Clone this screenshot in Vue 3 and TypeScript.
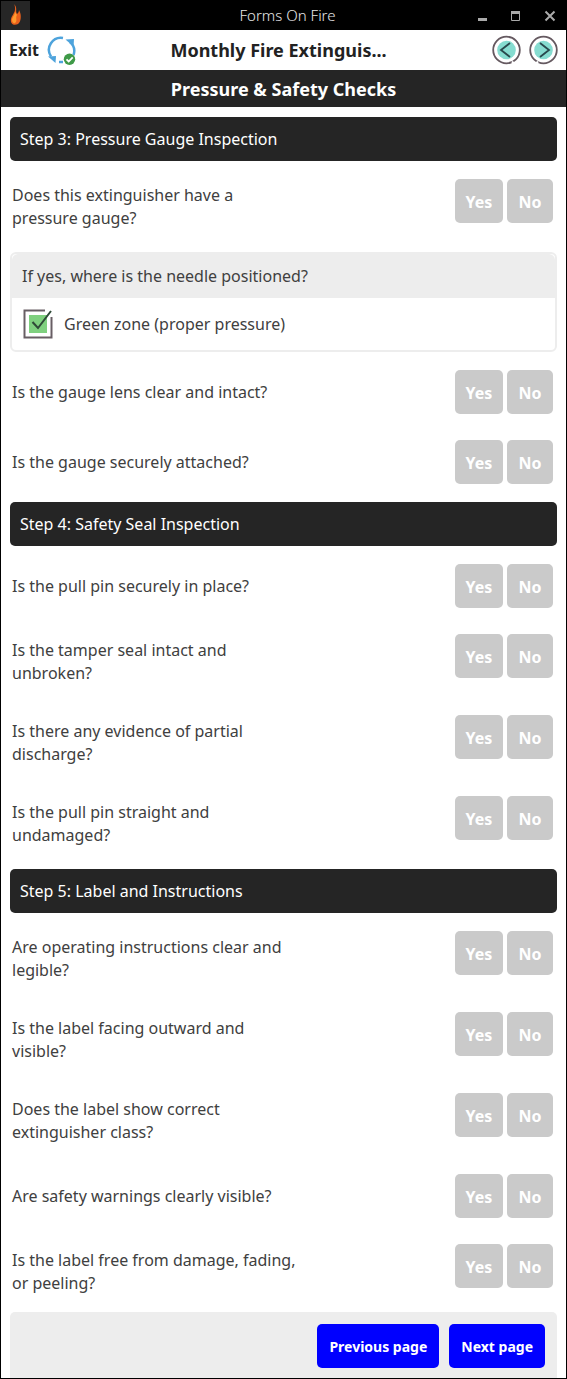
<script setup lang="ts">
import { reactive, ref } from 'vue'

type Answer = 'Yes' | 'No'

interface Question {
  id: string
  text: string
}

interface Section {
  title: string
  lead: Question[]
  needle: boolean
  questions: Question[]
}

const options: Answer[] = ['Yes', 'No']

const sections: Section[] = [
  {
    title: 'Step 3: Pressure Gauge Inspection',
    lead: [{ id: 'has-gauge', text: 'Does this extinguisher have a pressure gauge?' }],
    needle: true,
    questions: [
      { id: 'lens-clear', text: 'Is the gauge lens clear and intact?' },
      { id: 'gauge-attached', text: 'Is the gauge securely attached?' },
    ],
  },
  {
    title: 'Step 4: Safety Seal Inspection',
    lead: [],
    needle: false,
    questions: [
      { id: 'pin-place', text: 'Is the pull pin securely in place?' },
      { id: 'seal-intact', text: 'Is the tamper seal intact and unbroken?' },
      { id: 'discharge', text: 'Is there any evidence of partial discharge?' },
      { id: 'pin-straight', text: 'Is the pull pin straight and undamaged?' },
    ],
  },
  {
    title: 'Step 5: Label and Instructions',
    lead: [],
    needle: false,
    questions: [
      { id: 'instructions', text: 'Are operating instructions clear and legible?' },
      { id: 'label-outward', text: 'Is the label facing outward and visible?' },
      { id: 'label-class', text: 'Does the label show correct extinguisher class?' },
      { id: 'warnings', text: 'Are safety warnings clearly visible?' },
      { id: 'label-damage', text: 'Is the label free from damage, fading, or peeling?' },
    ],
  },
]

const answers = reactive<Record<string, Answer | undefined>>({})
const greenZone = ref(true)

function answer(id: string, value: Answer) {
  answers[id] = value
}
</script>

<template>
  <div class="window">
    <header class="titlebar">
      <span class="app-icon">
        <svg width="29" height="29" viewBox="0 0 29 29" aria-hidden="true">
          <path d="M13 3c4 4 1 7 3 10 1-1 2-2 2-4 3 5 2 12-1 14-4 2-8 0-7-5 1-4 4-6 4-10 0-2 0-3-1-5z" fill="#e8601c" />
          <path d="M14 9c1 4-3 7-3 10 0 2 2 4 3 3 3-2 0-5 2-8-1-1-2-3-2-5z" fill="#ff9a2e" />
        </svg>
      </span>
      <span class="app-name">Forms On Fire</span>
      <div class="controls">
        <button type="button" aria-label="Minimize">
          <svg width="12" height="12" viewBox="0 0 12 12"><path d="M2 9.500h9" stroke="#aaa" stroke-width="3" /></svg>
        </button>
        <button type="button" aria-label="Maximize">
          <svg width="12" height="12" viewBox="0 0 12 12"><path d="M1.500 2v8.500h8V2" fill="none" stroke="#aaa" /><path d="M1 2.500h9" stroke="#aaa" stroke-width="3" /></svg>
        </button>
        <button type="button" aria-label="Close">
          <svg width="12" height="12" viewBox="0 0 12 12"><path d="M1.500 1.500l9 9M10.500 1.500l-9 9" stroke="#aaa" stroke-width="2" /></svg>
        </button>
      </div>
    </header>

    <nav class="toolbar">
      <div class="left">
        <button type="button" class="exit">Exit</button>
        <button type="button" class="icon-button" aria-label="Sync">
          <svg width="30" height="30" viewBox="0 0 30 30" fill="none">
            <g stroke="#4da3dc" stroke-width="2.500">
              <path d="M16 3A12 12 0 0 0 4 21.500" />
              <path d="M23 7a12 12 0 0 1 3.500 13" />
              <path d="M12 27h4" />
            </g>
            <path d="M18.500 4.500l8.500-.500-.500 7.500z" fill="#4da3dc" />
            <path d="M1 21.500l8-.500-.500 7z" fill="#4da3dc" />
            <circle cx="22.500" cy="24.300" r="5.700" fill="#3f9a48" />
            <path d="M19.500 24.300l2.200 2.200 4-4.200" stroke="#fff" stroke-width="1.800" />
          </svg>
        </button>
      </div>
      <h1>Monthly Fire Extinguis...</h1>
      <div class="right">
        <button type="button" class="icon-button" aria-label="Previous">
          <svg width="29" height="30" viewBox="0 0 29 30" fill="none">
            <circle cx="14.500" cy="15" r="13.300" stroke="#655960" stroke-width="1.800" />
            <circle cx="14.500" cy="15" r="9.300" fill="#86dcd0" />
            <path d="M18 8l-9 7 9 7" stroke="#29484c" stroke-width="1.800" />
            <path d="M20 26.500l2 2" stroke="#fff" stroke-width="2" />
          </svg>
        </button>
        <button type="button" class="icon-button" aria-label="Next">
          <svg width="29" height="30" viewBox="0 0 29 30" fill="none">
            <circle cx="14.500" cy="15" r="13.300" stroke="#655960" stroke-width="1.800" />
            <circle cx="14.500" cy="15" r="9.300" fill="#86dcd0" />
            <path d="M11 8l9 7-9 7" stroke="#29484c" stroke-width="1.800" />
            <path d="M7 28.500l2-2" stroke="#fff" stroke-width="2" />
          </svg>
        </button>
      </div>
    </nav>

    <h2 class="page-title">Pressure &amp; Safety Checks</h2>

    <main class="form">
      <section v-for="section in sections" :key="section.title">
        <h3 class="step">{{ section.title }}</h3>

        <div v-for="q in section.lead" :key="q.id" class="question" role="group" :aria-labelledby="q.id">
          <p :id="q.id" class="label">{{ q.text }}</p>
          <div class="answers">
            <button v-for="o in options" :key="o" type="button" :aria-pressed="answers[q.id] === o" @click="answer(q.id, o)">{{ o }}</button>
          </div>
        </div>

        <fieldset v-if="section.needle" class="card" aria-labelledby="needle">
          <p id="needle" class="card-title">If yes, where is the needle positioned?</p>
          <label class="choice">
            <span class="tick">
              <input v-model="greenZone" type="checkbox" />
              <svg width="30" height="30" viewBox="0 0 30 30" fill="none" aria-hidden="true">
                <path d="M22 1.500H1.500v27h27V8" stroke="#685e64" stroke-width="2" />
                <g v-if="greenZone">
                  <path d="M6 6h18v18H6z" fill="#7fd07f" />
                  <path d="M9.500 13l5.500 6L28 2" stroke="#2f4a38" stroke-width="2" />
                </g>
              </svg>
            </span>
            Green zone (proper pressure)
          </label>
        </fieldset>

        <div v-for="q in section.questions" :key="q.id" class="question" role="group" :aria-labelledby="q.id">
          <p :id="q.id" class="label">{{ q.text }}</p>
          <div class="answers">
            <button v-for="o in options" :key="o" type="button" :aria-pressed="answers[q.id] === o" @click="answer(q.id, o)">{{ o }}</button>
          </div>
        </div>
      </section>

      <footer class="pager">
        <button type="button">Previous page</button>
        <button type="button">Next page</button>
      </footer>
    </main>
  </div>
</template>

<style>
body {
  margin: 0;
  background: #fff;
}
</style>

<style scoped>
.window {
  box-sizing: border-box;
  border: 1px solid #000;
  background: #fff;
  color: #404040;
  font-family: "Noto Sans", "Open Sans", sans-serif;
  font-size: 16px;
  line-height: 23px;
}

button {
  margin: 0;
  padding: 0;
  border: 0;
  background: none;
  font: inherit;
  color: inherit;
  cursor: pointer;
}

svg {
  display: block;
}

h1,
h2,
h3,
p {
  margin: 0;
}

.titlebar {
  display: grid;
  grid-template-columns: 92px 1fr 84px;
  align-items: center;
  height: 29px;
  background: #000;
  color: #e8e8e8;
}

.app-icon {
  width: 29px;
  background: #262626;
}

.app-name {
  text-align: center;
  font-size: 15px;
  font-weight: 300;
}

.controls {
  display: flex;
  justify-content: space-between;
  padding-right: 10px;
  margin-left: -6px;
}

.toolbar {
  display: grid;
  grid-template-columns: 1fr auto 1fr;
  align-items: center;
  height: 40px;
  padding: 0 8px;
  color: #222;
}

.left,
.right {
  display: flex;
  align-items: center;
  gap: 8px;
}

.right {
  justify-content: flex-end;
}

.exit {
  font-size: 16px;
  font-weight: 700;
}

h1 {
  padding-right: 10px;
  font-size: 18px;
  font-weight: 700;
}

.page-title {
  padding-top: 1px;
  background: #252525;
  color: #fff;
  text-align: center;
  font-size: 18px;
  font-weight: 700;
  line-height: 36px;
}

.form {
  padding: 10px 9px 0;
}

.step {
  margin-bottom: 5px;
  padding: 0 10px;
  border-radius: 5px;
  background: #252525;
  color: #fff;
  font-size: 16px;
  font-weight: 400;
  line-height: 44px;
}

section + section {
  margin-top: 5px;
}

.question {
  display: flex;
  justify-content: space-between;
  align-items: center;
  padding: 0 4px 0 2px;
}

.label {
  width: 285px;
  padding: 18px 0 17px;
}

.answers {
  display: flex;
  align-self: flex-start;
  gap: 4px;
  padding: 13px 0;
}

.answers button {
  width: 48px;
  height: 44px;
  padding-top: 2px;
  border-radius: 5px;
  background: #cacaca;
  color: #fff;
  font-weight: 700;
}

.answers button + button {
  width: 46px;
}

.card {
  min-width: 0;
  margin: 5px 0;
  padding: 0;
  overflow: hidden;
  border: 2px solid #ededed;
  border-radius: 6px;
}

.card-title {
  padding: 0 10px;
  background: #ededed;
  line-height: 44px;
}

.choice {
  display: flex;
  align-items: center;
  gap: 11px;
  height: 52px;
  padding: 0 11px;
}

.tick {
  position: relative;
}

.tick input {
  position: absolute;
  inset: 0;
  width: 100%;
  height: 100%;
  margin: 0;
  opacity: 0;
  cursor: pointer;
}

.pager {
  display: flex;
  justify-content: flex-end;
  gap: 10px;
  padding: 12px 12px 10px;
  border-radius: 5px 5px 0 0;
  background: #ededed;
}

.pager button {
  height: 44px;
  padding: 0 12px;
  border-radius: 5px;
  background: #00f;
  color: #fff;
  font-size: 14px;
  font-weight: 700;
}
</style>
